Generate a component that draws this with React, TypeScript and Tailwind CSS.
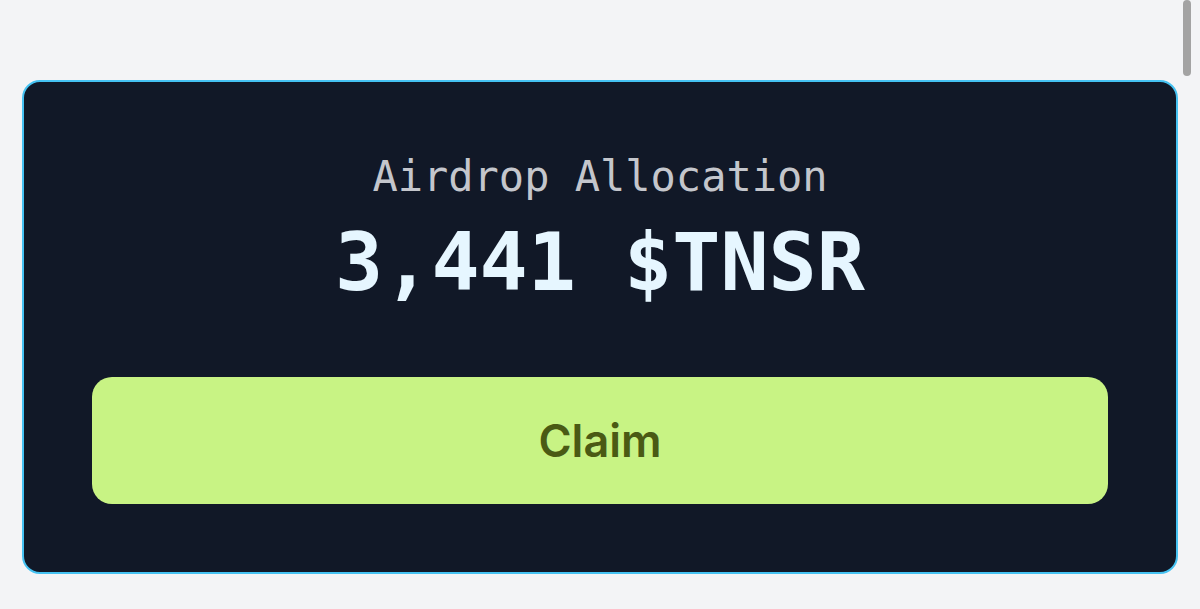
import React from 'react'

export default function App() {
  return (
    <div className="relative min-h-[609px] w-full bg-[#f3f4f6] pt-[80px] px-[22px]">
      {/* overlay scrollbar */}
      <div className="absolute right-[9px] top-0 h-[76px] w-[8px] rounded-full bg-[#a3a3a3]" />

      <div className="rounded-[18px] border-2 border-[#45c2f2] bg-[#111827] px-[68px] pt-[70px] pb-[68px]">
        <div className="flex flex-col items-center">
          <div
            className="text-[42px] leading-[50px] text-[#c4c6cc]"
            style={{ fontFamily: '"DejaVu Sans Mono", monospace' }}
          >
            Airdrop Allocation
          </div>
          <div
            className="mt-[13px] text-[80px] font-bold leading-[96px] text-[#e6f6ff]"
            style={{ fontFamily: '"DejaVu Sans Mono", monospace' }}
          >
            3,441 $TNSR
          </div>
        </div>

        <button
          className="mt-[66px] flex h-[127px] w-full items-center justify-center rounded-[20px] bg-[#c8f384] text-[45px] font-semibold text-[#4a5a14]"
          style={{ fontFamily: 'Inter, sans-serif' }}
        >
          Claim
        </button>
      </div>
    </div>
  )
}
